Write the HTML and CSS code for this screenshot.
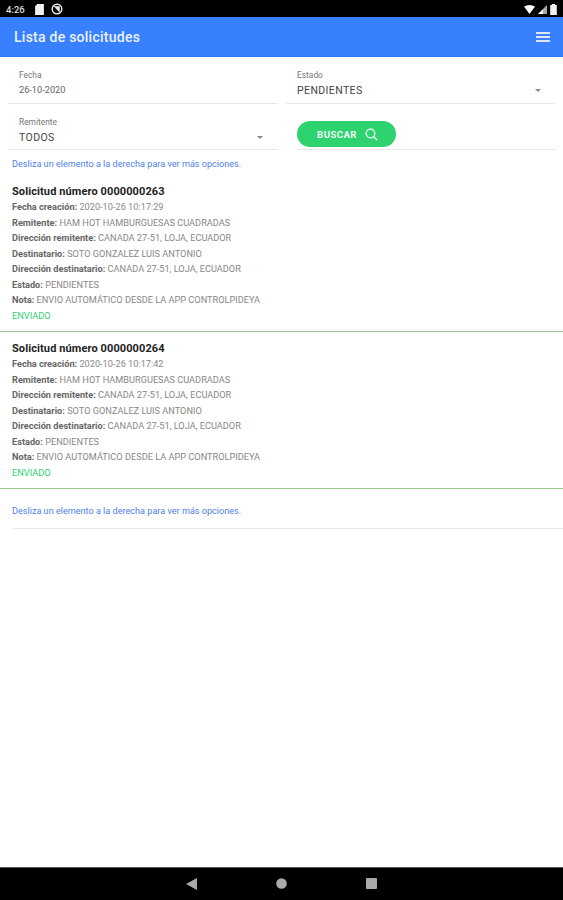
FILE: index.html
```html
<!DOCTYPE html>
<html lang="es">
<head>
  <meta name="viewport" content="width=device-width, initial-scale=1.0">
  <title>Lista de solicitudes</title>
  <link rel="stylesheet" href="styles.css">
</head>
<body>
  <div class="status-bar">
    <div class="status-left">
      <span class="clock">4:26</span>
      <svg width="9" height="11" viewBox="0 0 8 10"><path d="M2 0h6v10H0V2z" fill="#f2f2f2"/></svg>
      <svg width="12" height="12" viewBox="0 0 11 11"><circle cx="5.500" cy="5.500" r="4.400" fill="none" stroke="#e8e8e8" stroke-width="1.300"/><path d="M2.500 2.500l6 6M4 3.500h3.500v3z" stroke="#e8e8e8" fill="#e8e8e8"/></svg>
    </div>
    <div class="status-right">
      <svg width="11" height="9" viewBox="0 0 11 9"><path d="M0 1.500Q5.500-1.500 11 1.500L5.500 9z" fill="#fff"/></svg>
      <svg width="9" height="9" viewBox="0 0 9 9"><path d="M9 0v9H0z" fill="#aaa"/><path d="M5 4.500V9H0z" fill="#fff"/></svg>
      <svg width="7" height="11" viewBox="0 0 6 10"><path d="M1.500 0h3v1H6v9H0V1h1.500z" fill="#f2f2f2"/></svg>
    </div>
  </div>

  <header class="app-bar">
    <h1>Lista de solicitudes</h1>
    <svg width="14" height="10" viewBox="0 0 14 10"><path d="M0 0h14v2H0zM0 4h14v2H0zM0 8h14v2H0z" fill="#dbe7ff"/></svg>
  </header>

  <main class="content">
    <div class="filters">
      <div class="field">
        <label>Fecha</label>
        <div class="value value-date">26-10-2020</div>
      </div>
      <div class="field">
        <label>Estado</label>
        <div class="value">PENDIENTES <span class="caret"></span></div>
      </div>
      <div class="field field-short">
        <label>Remitente</label>
        <div class="value">TODOS <span class="caret"></span></div>
      </div>
      <div class="field-button">
        <button class="btn-search">BUSCAR
          <svg width="13" height="13" viewBox="0 0 13 13"><circle cx="5.500" cy="5.500" r="4.300" fill="none" stroke="#fff" stroke-width="1.300"/><path d="M8.700 8.700l3.500 3.500" stroke="#fff" stroke-width="1.300"/></svg>
        </button>
      </div>
    </div>

    <p class="hint">Desliza un elemento a la derecha para ver más opciones.</p>

    <article class="request">
      <h2>Solicitud número 0000000263</h2>
      <p><b>Fecha creación:</b> 2020-10-26 10:17:29</p>
      <p><b>Remitente:</b> HAM HOT HAMBURGUESAS CUADRADAS</p>
      <p><b>Dirección remitente:</b> CANADA 27-51, LOJA, ECUADOR</p>
      <p><b>Destinatario:</b> SOTO GONZALEZ LUIS ANTONIO</p>
      <p><b>Dirección destinatario:</b> CANADA 27-51, LOJA, ECUADOR</p>
      <p><b>Estado:</b> PENDIENTES</p>
      <p><b>Nota:</b> ENVIO AUTOMÁTICO DESDE LA APP CONTROLPIDEYA</p>
      <p class="sent">ENVIADO</p>
    </article>

    <article class="request">
      <h2>Solicitud número 0000000264</h2>
      <p><b>Fecha creación:</b> 2020-10-26 10:17:42</p>
      <p><b>Remitente:</b> HAM HOT HAMBURGUESAS CUADRADAS</p>
      <p><b>Dirección remitente:</b> CANADA 27-51, LOJA, ECUADOR</p>
      <p><b>Destinatario:</b> SOTO GONZALEZ LUIS ANTONIO</p>
      <p><b>Dirección destinatario:</b> CANADA 27-51, LOJA, ECUADOR</p>
      <p><b>Estado:</b> PENDIENTES</p>
      <p><b>Nota:</b> ENVIO AUTOMÁTICO DESDE LA APP CONTROLPIDEYA</p>
      <p class="sent">ENVIADO</p>
    </article>

    <div class="footer-hint">
      <p class="hint">Desliza un elemento a la derecha para ver más opciones.</p>
    </div>
  </main>

  <nav class="nav-bar">
    <svg width="11" height="12" viewBox="0 0 11 12"><path d="M11 0v12L0 6z" fill="#aaa"/></svg>
    <svg width="11" height="11" viewBox="0 0 11 11"><circle cx="5.500" cy="5.500" r="5.300" fill="#aaa"/></svg>
    <svg width="11" height="11" viewBox="0 0 11 11"><rect width="11" height="11" rx="1" fill="#aaa"/></svg>
  </nav>
</body>
</html>
```

FILE: styles.css
```css
* {
  box-sizing: border-box;
}

body {
  margin: 0;
  height: 900px;
  display: flex;
  flex-direction: column;
  background: #fff;
  font-family: Roboto, "Liberation Sans", sans-serif;
  overflow: hidden;
}

.status-bar {
  height: 17px;
  flex: none;
  background: #000;
  display: flex;
  justify-content: space-between;
  align-items: center;
  padding: 1px 6px 0;
}

.status-left,
.status-right {
  display: flex;
  align-items: center;
}

.status-left {
  gap: 7px;
}

.status-right {
  gap: 3px;
}

.clock {
  margin-right: 3px;
  color: #ddd;
  font-size: 9.500px;
  font-weight: 500;
}

.app-bar {
  height: 40px;
  flex: none;
  background: #3880ff;
  border-bottom: 1px solid #2f78f0;
  display: flex;
  justify-content: space-between;
  align-items: center;
  padding: 0 13px 0 14px;
}

.app-bar h1 {
  margin: 0;
  color: #eaf1ff;
  font-size: 14px;
  font-weight: 500;
  letter-spacing: 0.25px;
}

.content {
  flex: 1;
}

.filters {
  display: grid;
  grid-template-columns: 270px 270px;
  column-gap: 8px;
  padding: 0 7px 0 8px;
}

.field {
  height: 47px;
  padding: 14px 0 0 11px;
  border-bottom: 1px solid #e8e8e8;
}

.field-short {
  height: 46px;
  padding-top: 14px;
}

.field label {
  display: block;
  color: #777;
  font-size: 8.400px;
  line-height: 9px;
}

.value {
  display: flex;
  justify-content: space-between;
  align-items: center;
  padding-right: 15px;
  margin-top: 4px;
  color: #444;
  font-size: 10.500px;
  line-height: 13px;
  letter-spacing: 0.4px;
}

.value-date {
  margin-top: 3px;
  font-size: 9.200px;
  color: #666;
  letter-spacing: 0;
}

.caret {
  width: 0;
  height: 0;
  border-left: 3px solid transparent;
  border-right: 3px solid transparent;
  border-top: 3px solid #888;
}

.field-button {
  height: 46px;
  margin-left: 11px;
  padding-top: 17px;
  border-bottom: 1px solid #e8e8e8;
}

.btn-search {
  width: 99px;
  height: 26px;
  border: none;
  border-radius: 13px;
  background: #2dd36f;
  color: #f2fff7;
  font-family: inherit;
  font-size: 9.500px;
  font-weight: 700;
  letter-spacing: 0.5px;
  display: flex;
  align-items: center;
  justify-content: center;
  gap: 8px;
  padding: 0 0 0 2px;
}

.hint {
  margin: 0;
  padding: 8px 0 0 12px;
  height: 25px;
  color: #4f7fe8;
  font-size: 9.100px;
  line-height: 12px;
}

.request {
  height: 157px;
  padding: 9px 0 0 12px;
  border-bottom: 1px solid #9cc98e;
}

.request h2 {
  margin: 0;
  color: #222;
  font-size: 11px;
  font-weight: 700;
  line-height: 15px;
  letter-spacing: 0.1px;
}

.request p {
  margin: 0;
  color: #888;
  font-size: 9.200px;
  line-height: 15.500px;
}

.request p b {
  color: #666;
  font-weight: 700;
}

.request p.sent {
  color: #2dd36f;
}

.footer-hint {
  margin-left: 12px;
  height: 40px;
  border-bottom: 1px solid #e8e8e8;
}

.footer-hint .hint {
  padding: 16px 0 0;
}

.nav-bar {
  height: 33px;
  flex: none;
  background: #000;
  border-top: 1px solid #555;
  display: flex;
  justify-content: center;
  align-items: center;
  gap: 79px;
  padding-bottom: 1px;
}
```
